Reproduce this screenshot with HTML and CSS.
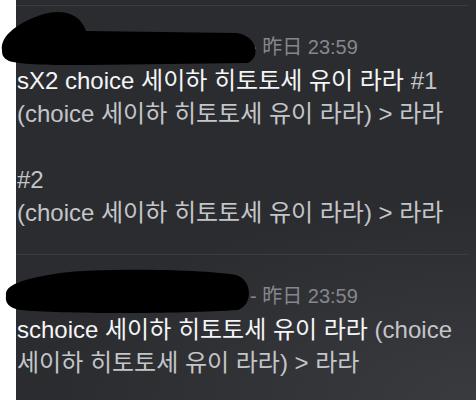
FILE: index.html
```html
<!DOCTYPE html>
<html lang="ko">
<head>
<meta charset="utf-8">
<title>채팅</title>
<link rel="stylesheet" href="styles.css">
</head>
<body>
<div class="chat">
  <div class="divider"></div>
  <div class="message">
    <div class="meta"><span class="author"></span><span class="time">- 昨日 23:59</span></div>
    <div class="body">
      <span class="strong">sX2 choice 세이하 히토토세 유이 라라</span> <span class="dim">#1</span><br>
      <span class="dim">(choice 세이하 히토토세 유이 라라) &gt; 라라</span><br>
      <br>
      <span class="dim">#2</span><br>
      <span class="dim">(choice 세이하 히토토세 유이 라라) &gt; 라라</span>
    </div>
  </div>
  <div class="divider"></div>
  <div class="message">
    <div class="meta"><span class="author"></span><span class="time">- 昨日 23:59</span></div>
    <div class="body">
      <span class="strong">schoice 세이하 히토토세 유이 라라</span> <span class="dim">(choice<br>세이하 히토토세 유이 라라) &gt; 라라</span>
    </div>
  </div>
</div>
<!-- redaction marks drawn over the author names -->
<svg class="redact" width="476" height="400" viewBox="0 0 476 400">
  <path d="M2 50 C0 36 18 22 44 14 C62 9 80 13 86 31 L236 33 C256 35 262 56 248 63 L86 65 C52 65 22 65 9 61 C3 58 2 55 2 50 Z"/>
  <path d="M6 296 C4 285 22 279 60 273 C100 268 200 269 236 275 C253 280 253 305 238 310 C180 314 60 314 20 310 C8 308 5 302 6 296 Z"/>
</svg>
</body>
</html>
```
FILE: styles.css
```css
html, body {
  margin: 0;
  padding: 0;
  background: #ffffff;
}

body {
  position: relative;
  width: 476px;
  height: 400px;
  overflow: hidden;
}

.chat {
  margin-left: 16px;
  height: 400px;
  background:
    radial-gradient(ellipse 420px 200px at 100% 100%, rgba(70, 71, 76, 0.55), rgba(70, 71, 76, 0) 100%),
    #2b2c30;
  font-family: "Liberation Sans", Arial, "Noto Sans CJK KR", sans-serif;
  overflow: hidden;
}

.divider {
  height: 1px;
  margin-right: 8px;
  background: #3c3d42;
}

.chat > .divider:first-child {
  margin-top: 5px;
}

.message {
  padding: 25px 0 25px 1px;
}

.meta {
  height: 33px;
  line-height: 33px;
  font-size: 20px;
  display: flex;
  align-items: center;
}

.author {
  display: inline-block;
  width: 233px;
}

.time {
  color: #85878c;
  font-family: "Liberation Sans", Arial, "Noto Sans CJK JP", sans-serif;
  white-space: pre;
}

.body {
  font-size: 24px;
  line-height: 33px;
  color: #c4c5c8;
  white-space: nowrap;
}

.strong {
  color: #f4f5f6;
}

.dim {
  color: #c4c5c8;
}

.redact {
  position: absolute;
  left: 0;
  top: 0;
  pointer-events: none;
}

.redact path {
  fill: #000000;
}
```
